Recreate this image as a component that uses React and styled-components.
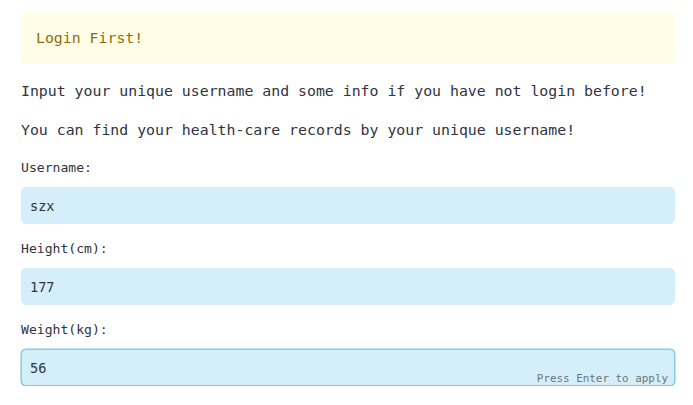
import React from "react";
import styled, { createGlobalStyle } from "styled-components";

const Global = createGlobalStyle`
  html, body { margin: 0; padding: 0; background: #ffffff; }
  body { font-family: "DejaVu Sans Mono", "Liberation Mono", monospace; color: #31333f; }
`;

const Page = styled.div`
  width: 654px;
  padding: 12px 0 0 21px;
  display: flex;
  flex-direction: column;
`;

const Alert = styled.div`
  height: 52px;
  box-sizing: border-box;
  padding: 0 15px;
  display: flex;
  align-items: center;
  background: #fffce7;
  border-radius: 4px;
  color: #926c05;
  font-size: 14.85px;
`;

const Para = styled.p`
  margin: ${(p) => p.$top}px 0 0 0;
  font-size: 14.85px;
  line-height: 24px;
  color: #31333f;
`;

const Field = styled.div`
  display: flex;
  flex-direction: column;
  margin-top: ${(p) => p.$top}px;
`;

const Label = styled.label`
  font-size: 13.1px;
  line-height: 20px;
  color: #31333f;
`;

const InputBox = styled.div`
  position: relative;
  margin-top: 9px;
  height: 37px;
  box-sizing: border-box;
  background: #d4effa;
  border: 1px solid ${(p) => (p.$focused ? "#7fcdea" : "#d4effa")};
  ${(p) => (p.$focused ? "box-shadow: 0 0 0 0.5px #7fcdea;" : "")}
  border-radius: 5px;
  display: flex;
  align-items: center;
  padding: 0 8px;
  font-size: 13.6px;
  color: #31333f;
`;

const Hint = styled.span`
  position: absolute;
  right: 6px;
  bottom: 0px;
  font-size: 10.9px;
  color: #6f7378;
`;

export default function App() {
  return (
    <>
      <Global />
      <Page>
        <Alert>Login First!</Alert>
        <Para $top={15}>Input your unique username and some info if you have not login before!</Para>
        <Para $top={15}>You can find your health-care records by your unique username!</Para>
        <Field $top={16}>
          <Label>Username:</Label>
          <InputBox>szx</InputBox>
        </Field>
        <Field $top={15}>
          <Label>Height(cm):</Label>
          <InputBox>177</InputBox>
        </Field>
        <Field $top={15}>
          <Label>Weight(kg):</Label>
          <InputBox $focused>
            56
            <Hint>Press Enter to apply</Hint>
          </InputBox>
        </Field>
      </Page>
    </>
  );
}
